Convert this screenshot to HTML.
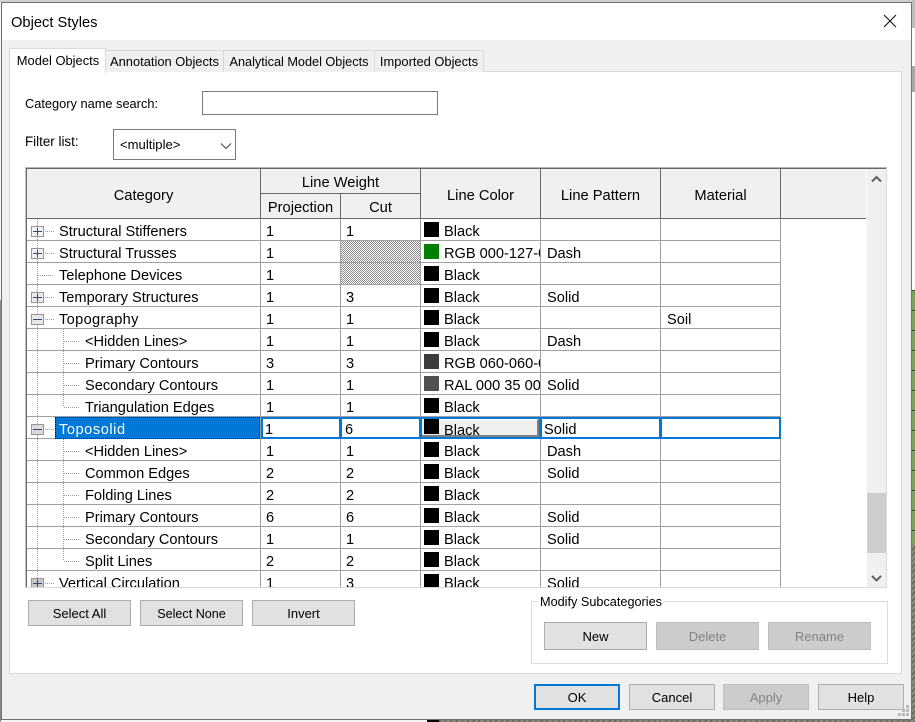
<!DOCTYPE html>
<html><head><meta charset="utf-8"><title>Object Styles</title>
<style>
html,body{margin:0;padding:0}
body{width:915px;height:722px;position:relative;overflow:hidden;background:#f6f6f6;font-family:"Liberation Sans",sans-serif;color:#000}
div,span{position:absolute;box-sizing:border-box;white-space:nowrap}
.tab{background:#f0f0f0;border:1px solid #d9d9d9;border-bottom:0;top:50px;height:22px;font-size:12.9px;line-height:22px;text-align:center}
.h{font-size:14.7px;line-height:20px;text-align:center;color:#000}
.vh{background:#696969;width:1px}
.btn{background:#e1e1e1;border:1px solid #adadad;font-size:13px;text-align:center;height:26px;line-height:25px;width:103px}
.dis{background:#ccc;border-color:#bfbfbf;color:#838383}
.r{left:27px;width:754px;height:22px;border-bottom:1px solid #a0a0a0}
.r span{top:0;font-size:14.6px;line-height:26px}
.n{left:32px}.s{left:58px}.a{left:239px}.b{left:319px}.p{left:520px}.m{left:640px}
.l{left:417px;width:96px;overflow:hidden}
.r i{position:absolute;left:397px;top:3px;width:15px;height:15px;background:#000}
.v{width:1px;top:0;height:368px;background:#a0a0a0}
.cell{top:198px;height:22px;border:2px solid #0078d7;background:#fff;font-size:14.6px;line-height:23px}
</style></head><body>
<div style="left:0;top:0;width:915px;height:2px;background:#cfcfcf"></div>
<div style="left:912px;top:0;width:3px;height:290px;background:#fdfdfd"></div>
<div style="left:912px;top:0;width:3px;height:28px;background:#bdbdbd"></div>
<div style="left:912px;top:66px;width:3px;height:26px;background:#a9a9a9"></div>
<div style="left:912px;top:290px;width:3px;height:255px;background:repeating-linear-gradient(180deg,#3c4a2c 0 1px,#7ba35e 1px 20px)"></div>
<div style="left:912px;top:545px;width:3px;height:177px;background:repeating-linear-gradient(135deg,#8f8879 0 3px,#5d5a50 3px 4px)"></div>
<div style="left:0;top:300px;width:1px;height:422px;background:#8a8a8a"></div>
<div style="left:430px;top:720px;width:485px;height:2px;background:repeating-linear-gradient(135deg,#8f8879 0 3px,#5d5a50 3px 4px)"></div>
<div style="left:427px;top:720px;width:12px;height:2px;background:#000"></div>

<div style="left:1px;top:2px;width:911px;height:718px;background:#f0f0f0;border:1px solid #707070"></div>
<div style="left:2px;top:3px;width:909px;height:37px;background:#fff"></div>
<div style="left:11px;top:13px;font-size:14.7px;line-height:20px">Object Styles</div>
<svg style="position:absolute;left:883px;top:14px" width="14" height="14"><path d="M1 1L13 13M13 1L1 13" stroke="#111" stroke-width="1.1" fill="none"/></svg>

<div style="left:9px;top:71px;width:893px;height:603px;background:#fff;border:1px solid #d9d9d9"></div>
<div class="tab" style="left:105px;width:119px">Annotation Objects</div>
<div class="tab" style="left:223px;width:152px;font-size:12.7px">Analytical Model Objects</div>
<div class="tab" style="left:374px;width:110px">Imported Objects</div>
<div class="tab" style="left:9px;top:48px;width:97px;height:25px;background:#fff;line-height:23px;padding-left:1px">Model Objects</div>

<div style="left:25px;top:95px;font-size:12.8px;line-height:18px">Category name search:</div>
<div style="left:202px;top:91px;width:236px;height:24px;border:1px solid #7a7a7a;background:#fff"></div>
<div style="left:25px;top:133px;font-size:13.4px;line-height:18px">Filter list:</div>
<div style="left:113px;top:129px;width:123px;height:31px;border:1px solid #7a7a7a;background:#fff"></div>
<div style="left:120px;top:136px;font-size:13.1px;line-height:18px">&lt;multiple&gt;</div>
<svg style="position:absolute;left:220px;top:142px" width="12" height="8"><path d="M1 1.5L6 6.5L11 1.5" stroke="#444" fill="none"/></svg>

<!-- grid frame -->
<div style="left:25px;top:167px;width:862px;height:421px;background:#fff;border-top:1px solid #b5b5b5;border-left:1px solid #c4c4c4;border-right:1px solid #d9d9d9;border-bottom:1px solid #d9d9d9"></div>
<div style="left:26px;top:168px;width:860px;height:419px;border-top:1px solid #696969;border-left:1px solid #696969"></div>
<!-- header -->
<div style="left:27px;top:169px;width:839px;height:49px;background:#f0f0f0"></div>
<div style="left:27px;top:218px;width:839px;height:1px;background:#696969"></div>
<div class="vh" style="left:260px;top:169px;height:49px"></div>
<div class="vh" style="left:340px;top:194px;height:24px"></div>
<div class="vh" style="left:420px;top:169px;height:49px"></div>
<div class="vh" style="left:540px;top:169px;height:49px"></div>
<div class="vh" style="left:660px;top:169px;height:49px"></div>
<div class="vh" style="left:780px;top:169px;height:49px"></div>
<div style="left:261px;top:193px;width:159px;height:1px;background:#696969"></div>
<div class="h" style="left:27px;top:186px;width:233px">Category</div>
<div class="h" style="left:261px;top:173px;width:159px">Line Weight</div>
<div class="h" style="left:261px;top:198px;width:79px">Projection</div>
<div class="h" style="left:341px;top:198px;width:79px">Cut</div>
<div class="h" style="left:421px;top:186px;width:119px">Line Color</div>
<div class="h" style="left:541px;top:186px;width:119px">Line Pattern</div>
<div class="h" style="left:661px;top:186px;width:119px">Material</div>

<!-- body -->
<div style="left:0;top:219px;width:866px;height:368px;overflow:hidden">
<div class="v" style="left:260px"></div><div class="v" style="left:340px"></div><div class="v" style="left:420px"></div><div class="v" style="left:540px"></div><div class="v" style="left:660px"></div><div class="v" style="left:780px"></div>
<svg style="position:absolute;left:341px;top:22px" width="79" height="43" shape-rendering="crispEdges"><defs><pattern id="ck" width="2" height="2" patternUnits="userSpaceOnUse"><rect width="2" height="2" fill="#fff"/><rect width="1" height="1" fill="#8a8a8a"/><rect x="1" y="1" width="1" height="1" fill="#8a8a8a"/></pattern></defs><rect width="79" height="43" fill="url(#ck)"/></svg>
<div class="r" style="top:0"><span class="n">Structural Stiffeners</span><span class="a">1</span><span class="b">1</span><i></i><span class="l">Black</span></div>
<div class="r" style="top:22px"><span class="n">Structural Trusses</span><span class="a">1</span><i style="background:#007f00"></i><span class="l">RGB 000-127-000</span><span class="p">Dash</span></div>
<div class="r" style="top:44px"><span class="n">Telephone Devices</span><span class="a">1</span><i></i><span class="l">Black</span></div>
<div class="r" style="top:66px"><span class="n">Temporary Structures</span><span class="a">1</span><span class="b">3</span><i></i><span class="l">Black</span><span class="p">Solid</span></div>
<div class="r" style="top:88px"><span class="n" style="letter-spacing:.35px">Topography</span><span class="a">1</span><span class="b">1</span><i></i><span class="l">Black</span><span class="m">Soil</span></div>
<div class="r" style="top:110px"><span class="s">&lt;Hidden Lines&gt;</span><span class="a">1</span><span class="b">1</span><i></i><span class="l">Black</span><span class="p">Dash</span></div>
<div class="r" style="top:132px"><span class="s">Primary Contours</span><span class="a">3</span><span class="b">3</span><i style="background:#3c3c3c"></i><span class="l">RGB 060-060-060</span></div>
<div class="r" style="top:154px"><span class="s">Secondary Contours</span><span class="a">1</span><span class="b">1</span><i style="background:#505050"></i><span class="l">RAL 000 35 00</span><span class="p">Solid</span></div>
<div class="r" style="top:176px"><span class="s">Triangulation Edges</span><span class="a">1</span><span class="b">1</span><i></i><span class="l">Black</span></div>
<div class="r" style="top:198px"></div>
<div class="r" style="top:220px"><span class="s">&lt;Hidden Lines&gt;</span><span class="a">1</span><span class="b">1</span><i></i><span class="l">Black</span><span class="p">Dash</span></div>
<div class="r" style="top:242px"><span class="s">Common Edges</span><span class="a">2</span><span class="b">2</span><i></i><span class="l">Black</span><span class="p">Solid</span></div>
<div class="r" style="top:264px"><span class="s">Folding Lines</span><span class="a">2</span><span class="b">2</span><i></i><span class="l">Black</span></div>
<div class="r" style="top:286px"><span class="s">Primary Contours</span><span class="a">6</span><span class="b">6</span><i></i><span class="l">Black</span><span class="p">Solid</span></div>
<div class="r" style="top:308px"><span class="s">Secondary Contours</span><span class="a">1</span><span class="b">1</span><i></i><span class="l">Black</span><span class="p">Solid</span></div>
<div class="r" style="top:330px"><span class="s">Split Lines</span><span class="a">2</span><span class="b">2</span><i></i><span class="l">Black</span></div>
<div class="r" style="top:352px"><span class="n">Vertical Circulation</span><span class="a">1</span><span class="b">3</span><i></i><span class="l">Black</span><span class="p">Solid</span></div>

<svg style="position:absolute;left:0;top:0" width="100" height="368">
<defs><linearGradient id="g" x1="0" y1="0" x2="0" y2="1"><stop offset="0" stop-color="#f4f4f4"/><stop offset="1" stop-color="#c6c6c6"/></linearGradient></defs>
<path d="M37.5 0V368M45 12.5H54M45 34.5H54M38 56.5H54M45 78.5H54M45 100.5H54M45 210.5H54M45 364.5H54M63.5 110V188M64 122.5H80M64 144.5H80M64 166.5H80M64 188.5H80M63.5 220V342M64 232.5H80M64 254.5H80M64 276.5H80M64 298.5H80M64 320.5H80M64 342.5H80" stroke="#9a9a9a" stroke-dasharray="1 1" fill="none"/>
<path d="M31.5 7.5h12v10h-12zM31.5 29.5h12v10h-12zM31.5 73.5h12v10h-12zM31.5 95.5h12v10h-12zM31.5 205.5h12v10h-12zM31.5 359.5h12v10h-12z" stroke="#979797" fill="url(#g)"/>
<path d="M33 12.5h9M37.5 8.5v8M33 34.5h9M37.5 30.5v8M33 78.5h9M37.5 74.5v8M33 100.5h9M33 210.5h9M33 364.5h9M37.5 360.5v7.5" stroke="#3a4672" fill="none"/>
</svg>

<!-- selected row -->
<div style="left:55px;top:198px;width:205px;height:22px;background:#0078d7;color:#fff;font-size:14.6px;line-height:26px;padding-left:4px;letter-spacing:.55px;outline:1px dotted #111;outline-offset:-1px">Toposolid</div>
<div class="cell" style="left:261px;width:80px;padding-left:2px">1</div>
<div class="cell" style="left:340px;width:81px;padding-left:3px">6</div>
<div class="cell" style="left:420px;width:121px"></div>
<div style="left:422px;top:200px;width:117px;height:18px;background:#f0f0f0;border-right:2px solid #808080;border-bottom:2px solid #808080;border-top:1px solid #fff"></div>
<div style="left:424px;top:200px;width:15px;height:15px;background:#000"></div>
<div style="left:444px;top:200px;font-size:14.6px;line-height:24px">Black</div>
<div class="cell" style="left:540px;width:121px;padding-left:2px">Solid</div>
<div class="cell" style="left:660px;width:121px"></div>
</div>

<!-- scrollbar -->
<div style="left:867px;top:169px;width:19px;height:418px;background:#f0f0f0"></div>
<div style="left:867px;top:493px;width:19px;height:60px;background:#cdcdcd"></div>
<svg style="position:absolute;left:871px;top:175px" width="11" height="9"><path d="M1 6.5L5.5 2L10 6.5" stroke="#606060" stroke-width="2" fill="none"/></svg>
<svg style="position:absolute;left:871px;top:574px" width="11" height="9"><path d="M1 2L5.5 6.5L10 2" stroke="#606060" stroke-width="2" fill="none"/></svg>

<!-- buttons -->
<div class="btn" style="left:28px;top:600px">Select All</div>
<div class="btn" style="left:140px;top:600px;font-size:12.6px;line-height:26px">Select None</div>
<div class="btn" style="left:252px;top:600px">Invert</div>

<div style="left:531px;top:601px;width:357px;height:63px;border:1px solid #dcdcdc"></div>
<div style="left:538px;top:595px;background:#fff;padding:0 2px;font-size:12.7px;line-height:15px">Modify Subcategories</div>
<div class="btn" style="left:544px;top:622px;height:28px;line-height:27px">New</div>
<div class="btn dis" style="left:656px;top:622px;height:28px;line-height:27px">Delete</div>
<div class="btn dis" style="left:768px;top:622px;height:28px;line-height:27px">Rename</div>

<div class="btn" style="left:534px;top:684px;width:86px;border:2px solid #0078d7;line-height:24px">OK</div>
<div class="btn" style="left:629px;top:684px;width:86px">Cancel</div>
<div class="btn dis" style="left:723px;top:684px;width:86px">Apply</div>
<div class="btn" style="left:818px;top:684px;width:86px">Help</div>
<svg style="position:absolute;left:898px;top:705px" width="12" height="12"><path d="M8 0h3v3H8zM4 4h3v3H4zM8 4h3v3H8zM0 8h3v3H0zM4 8h3v3H4zM8 8h3v3H8z" fill="#b9b9b9"/></svg>
</body></html>
